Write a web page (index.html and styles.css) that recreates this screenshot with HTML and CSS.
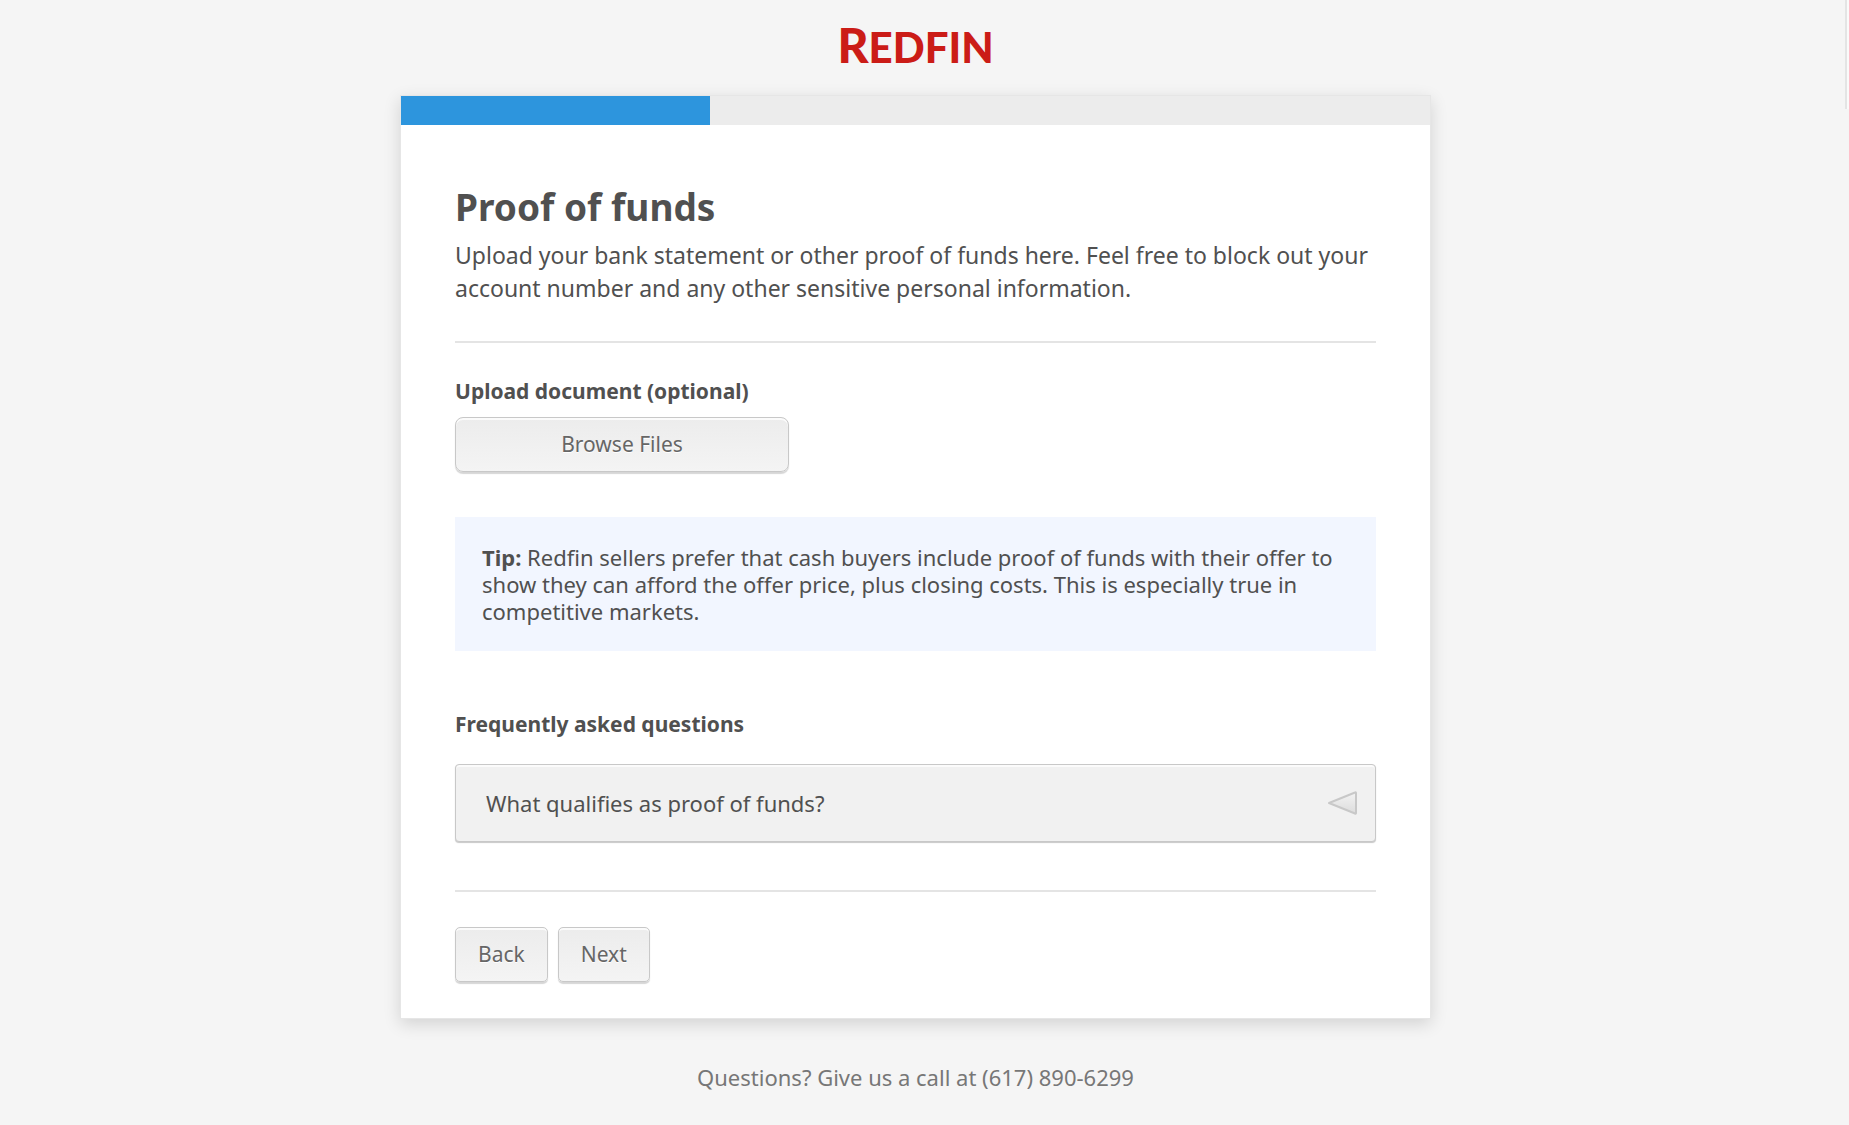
FILE: index.html
```html
<!DOCTYPE html>
<html lang="en">
<head>
<meta charset="utf-8">
<meta name="viewport" content="width=device-width, initial-scale=1">
<title>Proof of funds - Redfin</title>
<link rel="stylesheet" href="styles.css">
</head>
<body>
<header class="site-header"><a class="logo" href="#"><span class="logo-initial">R</span>EDFIN</a></header>
<main class="card">
  <div class="progress"><div class="progress-fill" style="width: 30%"></div></div>
  <form class="content">
    <h1 class="title">Proof of funds</h1>
    <p class="intro">Upload your bank statement or other proof of funds here. Feel free to block out your account number and any other sensitive personal information.</p>
    <hr class="rule">
    <label class="section-label" for="browse">Upload document (optional)</label>
    <button class="button browse" id="browse" type="button">Browse Files</button>
    <p class="tip"><strong>Tip:</strong> Redfin sellers prefer that cash buyers include proof of funds with their offer to show they can afford the offer price, plus closing costs. This is especially true in competitive markets.</p>
    <h2 class="section-label">Frequently asked questions</h2>
    <button class="faq" type="button" aria-expanded="false">
      <span>What qualifies as proof of funds?</span>
      <svg class="faq-arrow" width="32" height="26" viewBox="0 0 32 26" aria-hidden="true">
        <defs><linearGradient id="arrow-fill" x1="0" y1="0" x2="0" y2="1"><stop offset="0" stop-color="#f3f3f3"/><stop offset="1" stop-color="#dcdcdc"/></linearGradient></defs>
        <path d="M2 13 28 2.500Q29 2 29 3V23Q29 24 28 23.500Z" fill="url(#arrow-fill)" stroke="#c8c8c8" stroke-width="2" stroke-linejoin="round"/>
      </svg>
    </button>
    <hr class="rule">
    <div class="actions">
      <button class="button" type="button">Back</button>
      <button class="button" type="submit">Next</button>
    </div>
  </form>
</main>
<footer class="site-footer">Questions? Give us a call at (617) 890-6299</footer>
<div class="scroll-edge"></div>
</body>
</html>
```

FILE: styles.css
```css
* { box-sizing: border-box; }

body {
  margin: 0;
  padding: 0 18px 24px 0;
  position: relative;
  background: #f5f5f5;
  color: #505050;
  font-family: "Noto Sans", "Open Sans", sans-serif;
  font-size: 22px;
  line-height: 27px;
}

.site-header {
  display: flex;
  justify-content: center;
  padding-top: 17px;
  height: 95px;
}

.logo {
  color: #cb1c17;
  font-family: Lato, sans-serif;
  font-size: 42px;
  font-weight: 900;
  line-height: 56px;
  text-decoration: none;
}

.logo-initial { font-size: 48px; }

.card {
  max-width: 1031px;
  margin: 0 auto;
  background: #fff;
  border: 1px solid #e6e6e6;
  box-shadow: 0 5px 16px rgba(0, 0, 0, 0.14);
}

.progress { height: 29px; background: #ececec; }
.progress-fill { height: 100%; background: #2d95dd; }

.content {
  display: flex;
  flex-direction: column;
  padding: 58px 54px 36px;
}

.title {
  margin: 0;
  font-size: 37px;
  line-height: 48px;
}

.intro {
  margin: 8px 0 0;
  font-size: 23px;
  line-height: 33px;
}

.rule {
  width: 100%;
  height: 2px;
  margin: 36px 0 35px;
  border: 0;
  background: #e4e4e4;
}

.section-label {
  margin: 0;
  font-size: 21px;
  font-weight: 700;
  line-height: 27px;
}

.button {
  height: 55px;
  padding: 0 22px;
  border: 1px solid #c8c8c8;
  border-radius: 5px;
  background: linear-gradient(#ececec, #f4f4f4);
  box-shadow: 0 2px 1px #d6d6d6, inset 0 2px 0 #fbfbfb;
  color: #666;
  font: inherit;
  font-size: 21px;
  text-shadow: 0 1px 0 #fff;
}

.browse {
  width: 334px;
  margin-top: 12px;
  border-radius: 8px;
}

.tip {
  margin: 45px 0 60px;
  padding: 27px 27px 26px;
  background: #f2f6ff;
}

.faq {
  display: flex;
  align-items: center;
  justify-content: space-between;
  height: 78px;
  margin: 26px 0 12px;
  padding: 0 16px 0 30px;
  border: 1px solid #c8c8c8;
  border-radius: 4px;
  background: #f1f1f1;
  box-shadow: 0 1px 1px #c8c8c8, inset 0 2px 0 #fbfbfb;
  color: #505050;
  font: inherit;
}

.actions { display: flex; gap: 10px; }

.site-footer {
  padding-top: 45px;
  color: #777;
  text-align: center;
}

.scroll-edge {
  position: absolute;
  top: 0;
  right: 0;
  width: 4px;
  height: 109px;
  border-left: 2px solid #e4e4e4;
  background: #fafafa;
}
```
